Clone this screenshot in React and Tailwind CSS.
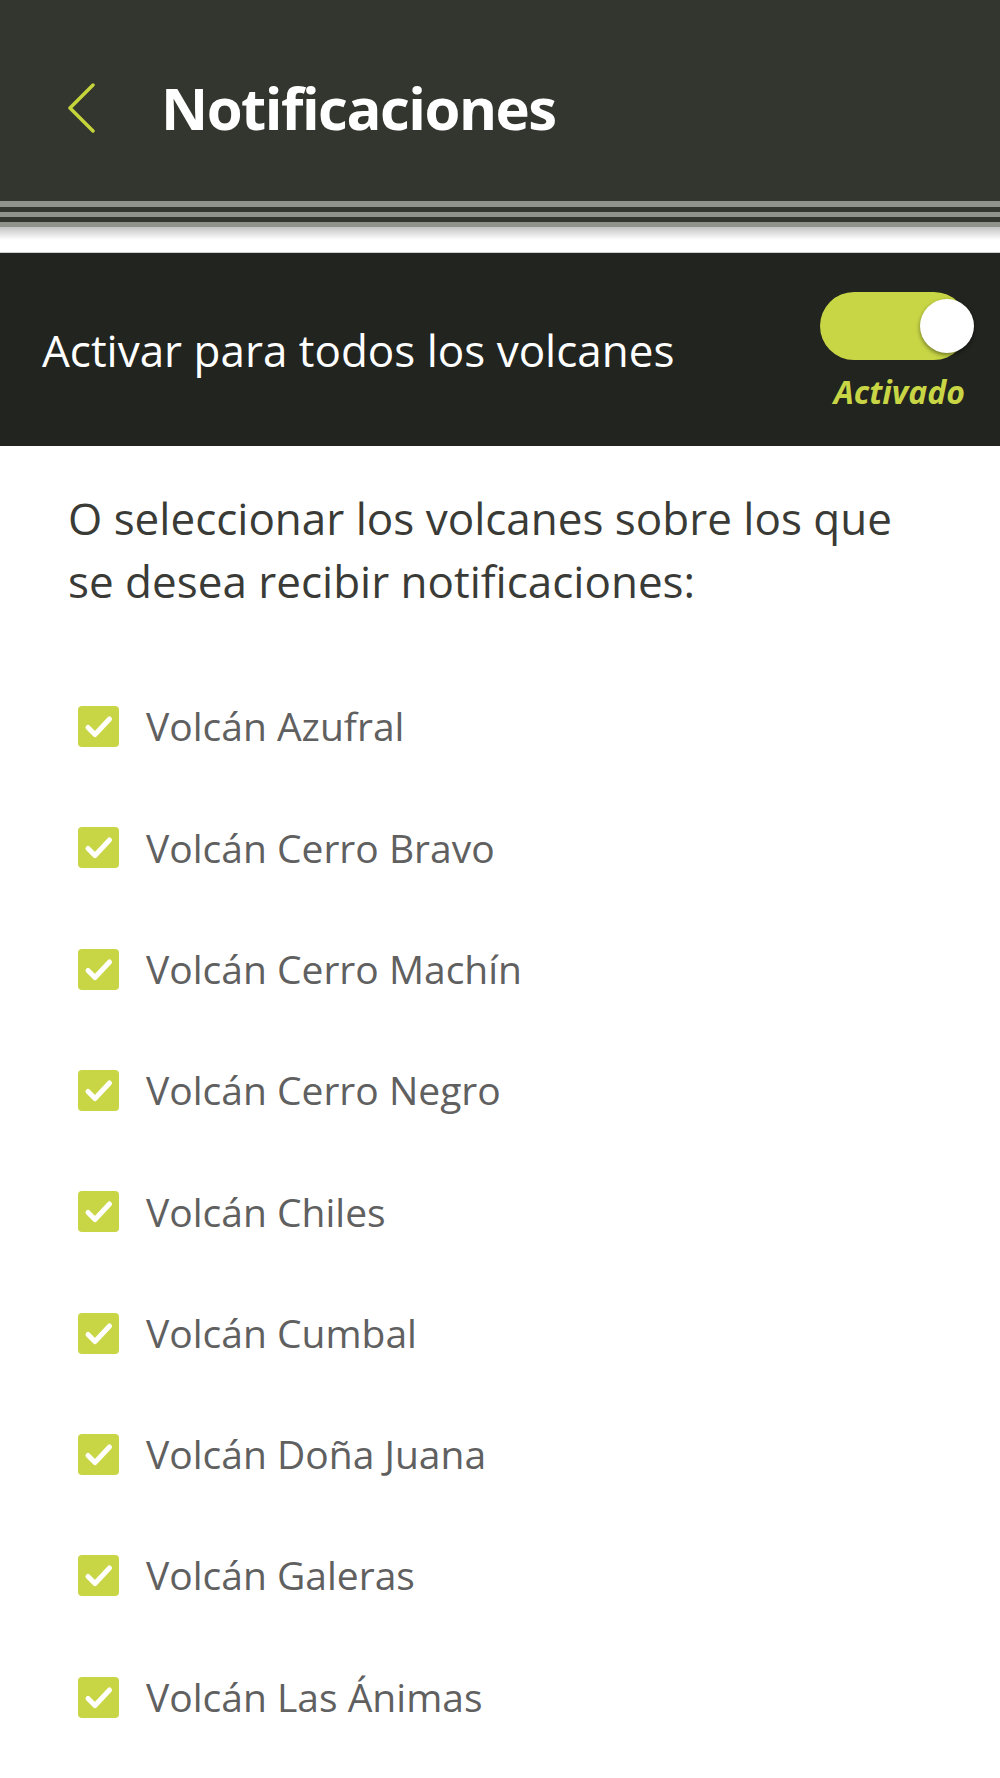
import { useState } from "react";

const VOLCANES = [
  "Volcán Azufral",
  "Volcán Cerro Bravo",
  "Volcán Cerro Machín",
  "Volcán Cerro Negro",
  "Volcán Chiles",
  "Volcán Cumbal",
  "Volcán Doña Juana",
  "Volcán Galeras",
  "Volcán Las Ánimas",
];

const CheckBox = ({ checked }) => (
  <div
    className={`flex h-[41px] w-[41px] shrink-0 items-center justify-center rounded-[4px] ${
      checked ? "bg-[#c8d645]" : "border-2 border-[#c8d645] bg-white"
    }`}
  >
    {checked && (
      <svg width="41" height="41" viewBox="0 0 41 41" fill="none">
        <path
          d="M10 21.5 L17 28.5 L31.5 13"
          stroke="white"
          strokeWidth="5"
          strokeLinecap="round"
          strokeLinejoin="round"
        />
      </svg>
    )}
  </div>
);

const App = () => {
  const [all, setAll] = useState(true);
  const [selected, setSelected] = useState(VOLCANES.map(() => true));

  return (
    <div className="h-[1778px] w-[1000px] overflow-hidden bg-white font-['Open_Sans',sans-serif]">
      {/* Top bar */}
      <div className="flex h-[201px] items-center bg-[#33362e] pl-[66px] pt-[14px]">
        <svg width="30" height="50" viewBox="0 0 30 50" fill="none">
          <path
            d="M27 2 L4 25 L27 48"
            stroke="#c5d43a"
            strokeWidth="3.5"
            strokeLinecap="round"
            strokeLinejoin="round"
          />
        </svg>
        <h1 className="ml-[65px] text-[58px] font-bold tracking-[-1.5px] text-white">
          Notificaciones
        </h1>
      </div>
      <div className="h-[6px] bg-[#8f938b]" />
      <div className="h-[5px] bg-[#33362e]" />
      <div className="h-[5px] bg-[#8f938b]" />
      <div className="h-[5px] bg-[#33362e]" />
      <div className="h-[5px] bg-[#8f938b]" />
      <div className="h-[13px] bg-gradient-to-b from-[#c4c4c4] to-white" />
      <div className="h-[13px] border-b border-[#cfcfcf] bg-white" />

      {/* All volcanoes switch */}
      <div className="flex h-[193px] items-center justify-between bg-[#22241f] pl-[42px] pr-[32px]">
        <span className="text-[44px] text-white">Activar para todos los volcanes</span>
        <div className="flex flex-col items-end self-start pt-[39px]">
          <button
            onClick={() => setAll(!all)}
            className="relative h-[68px] w-[148px] rounded-full bg-[#c8d645]"
          >
            <span className="absolute right-[-6px] top-[7px] h-[54px] w-[54px] rounded-full bg-white shadow-[0_2px_4px_rgba(0,0,0,0.45)]" />
          </button>
          <span className="mr-[3px] mt-[12px] text-[32px] font-bold italic leading-[40px] text-[#c8d645]">
            {all ? "Activado" : "Desactivado"}
          </span>
        </div>
      </div>

      {/* Intro text */}
      <p className="px-[68px] pt-[41px] text-[44px] leading-[63px] text-[#3a3b36]">
        O seleccionar los volcanes sobre los que
        <br />
        se desea recibir notificaciones:
      </p>

      {/* Volcano list */}
      <ul className="mt-[53px]">
        {VOLCANES.map((name, i) => (
          <li
            key={name}
            onClick={() =>
              setSelected(selected.map((v, j) => (j === i ? !v : v)))
            }
            className="flex h-[121.3px] items-center gap-[27px] pl-[78px]"
          >
            <CheckBox checked={selected[i]} />
            <span className="text-[39px] text-[#606060]">{name}</span>
          </li>
        ))}
      </ul>
    </div>
  );
};

export default App;
